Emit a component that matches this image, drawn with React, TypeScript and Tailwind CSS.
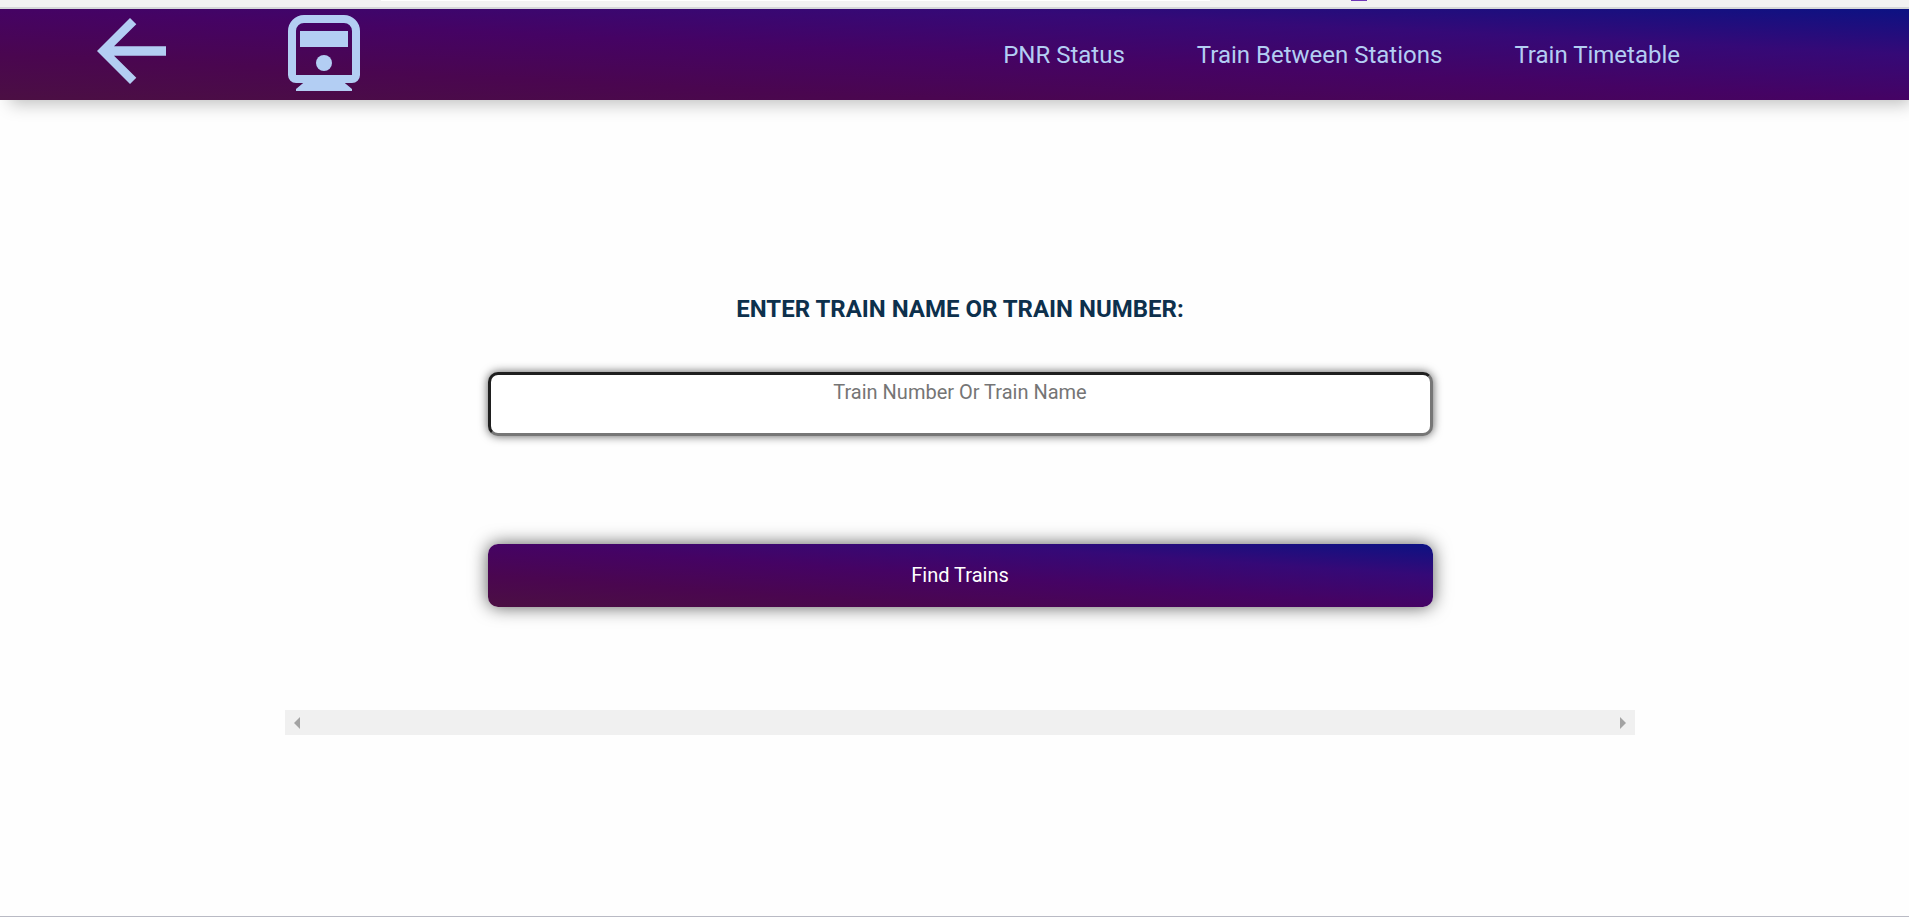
import React from "react";

const NAV_LINKS = ["PNR Status", "Train Between Stations", "Train Timetable"];

function ArrowBackIcon() {
  return (
    <svg viewBox="0 0 69 66" className="h-[66px] w-[69px]" fill="currentColor" aria-hidden="true">
      <path d="M0 33 33 0 39.300 6.300 17 28.200H69V37.800H17L39.300 59.700 33 66Z" />
    </svg>
  );
}

function TrainIcon() {
  return (
    <svg viewBox="0 0 18 19" className="h-[76px] w-[72px]" fill="currentColor" aria-hidden="true">
      <path
        fillRule="evenodd"
        d="M4 0h10a4 4 0 0 1 4 4v11a2 2 0 0 1-2 2h-1.800L16 18.500V19H2v-.5L3.800 17H2a2 2 0 0 1-2-2V4a4 4 0 0 1 4-4ZM4 2a2 2 0 0 0-2 2v11h14V4a2 2 0 0 0-2-2ZM3 4h12v4H3Z"
      />
      <circle cx="9" cy="12" r="2" />
    </svg>
  );
}

function Header() {
  return (
    <header className="flex h-[91px] items-start bg-[linear-gradient(to_right_top,#4b0f43,#4a0650,#450364,#350977,#0c1283)] pr-[229px] pl-[97px] text-[#b3cef3] shadow-[6px_8px_16px_-4px_rgba(0,0,0,0.25)]">
      <a href="#back" aria-label="Back" className="mt-[9px]">
        <ArrowBackIcon />
      </a>
      <a href="#home" aria-label="Home" className="mt-[6px] ml-[122px]">
        <TrainIcon />
      </a>
      <nav className="ml-auto flex gap-[72px] self-center text-2xl">
        {NAV_LINKS.map((label) => (
          <a key={label} href="#" className="whitespace-nowrap">
            {label}
          </a>
        ))}
      </nav>
    </header>
  );
}

function ResultsScroller() {
  return (
    <div className="mt-[103px] flex h-[25px] items-center justify-between bg-[#f0f0f0] px-[9px] text-[#a3a3a3]">
      <button type="button" aria-label="Scroll left">
        <svg viewBox="0 0 6 12" className="h-3 w-1.5" fill="currentColor" aria-hidden="true">
          <path d="M6 0v12L0 6Z" />
        </svg>
      </button>
      <button type="button" aria-label="Scroll right">
        <svg viewBox="0 0 6 12" className="h-3 w-1.5" fill="currentColor" aria-hidden="true">
          <path d="M0 0v12l6-6Z" />
        </svg>
      </button>
    </div>
  );
}

export default function App() {
  return (
    <div className="flex min-h-screen flex-col overflow-x-clip border-b border-[#b9bac4] bg-[#fefefe] font-[Roboto,sans-serif]">
      <div className="relative z-10 h-[9px] border-b-2 border-[#d5d7d9] bg-[#f2f2f2]">
        <div className="flex h-px pl-[381px]">
          <div className="w-[829px] bg-white" />
          <div className="ml-[141px] w-4 bg-[#7038b8]" />
        </div>
      </div>
      <Header />
      <main className="pt-[193px] pr-[274px] pl-[285px]">
        <form className="mx-auto flex w-[70%] flex-col" onSubmit={(e) => e.preventDefault()}>
          <label htmlFor="train" className="text-center text-2xl font-bold text-[#0d304c]">
            ENTER TRAIN NAME OR TRAIN NUMBER:
          </label>
          <input
            id="train"
            type="text"
            placeholder="Train Number Or Train Name"
            className="mt-[47px] h-16 rounded-[10px] border-3 border-t-[#1f1f1f] border-r-[#767676] border-b-[#767676] border-l-[#1f1f1f] bg-white pb-6 text-center text-xl placeholder:text-[#757575] shadow-[0_0_10px_rgba(0,0,0,0.65)]"
          />
          <button
            type="submit"
            className="mt-[108px] h-[63px] rounded-[10px] bg-[linear-gradient(to_right_top,#4b0f43,#4a0650,#450364,#350977,#0c1283)] pb-0.5 text-xl text-white shadow-[0_0_18px_rgba(0,0,0,0.65)]"
          >
            Find Trains
          </button>
        </form>
        <ResultsScroller />
      </main>
    </div>
  );
}
